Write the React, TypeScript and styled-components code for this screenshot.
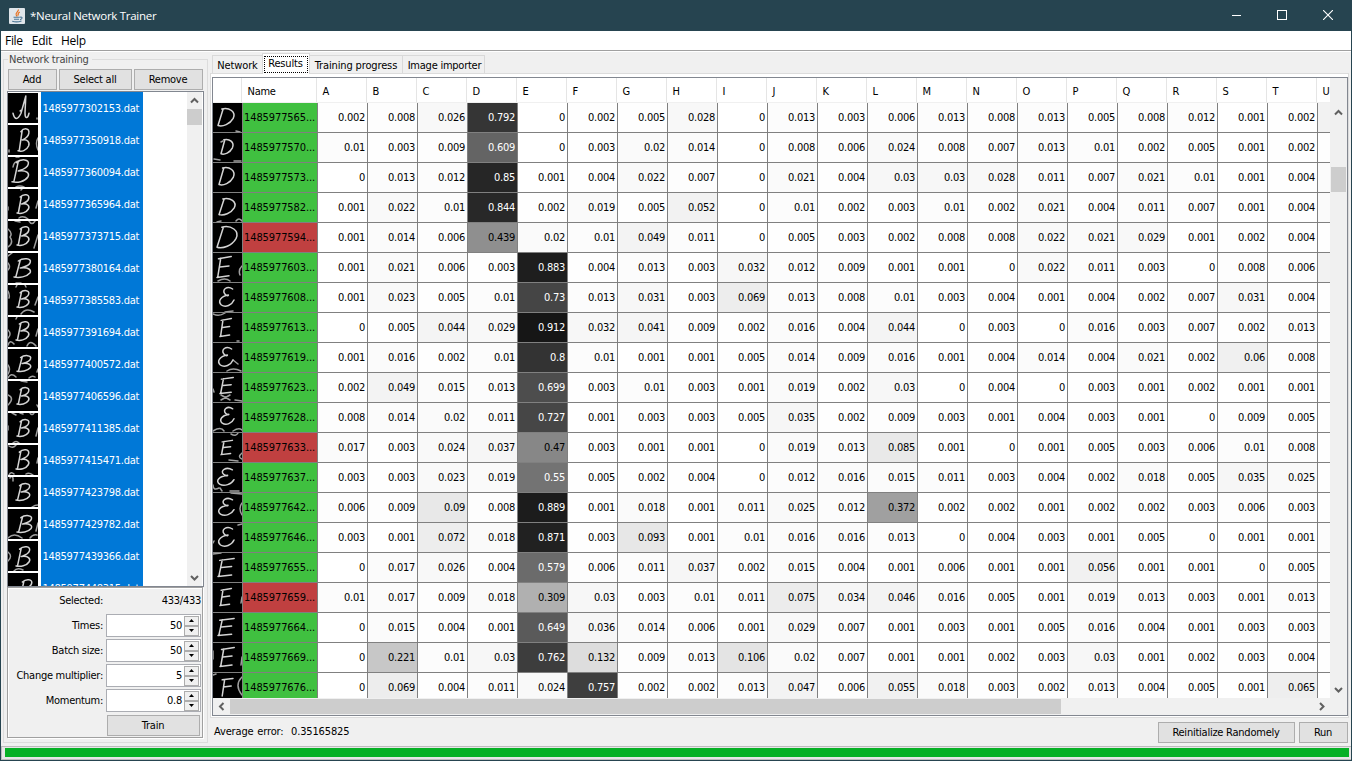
import React from "react";
import styled, { createGlobalStyle, css } from "styled-components";

const GlobalStyle = createGlobalStyle`
  *, *::before, *::after { box-sizing: border-box; }
  body {
    margin: 0;
    overflow: hidden;
    font-family: "DejaVu Sans Condensed", "DejaVu Sans", sans-serif;
    font-stretch: condensed;
    font-size: 11px;
    letter-spacing: -0.27px;
    line-height: 14px;
    color: #000;
  }
`;

/* ---------- window frame ---------- */

const Window = styled.div`
  width: 1352px;
  height: 761px;
  display: flex;
  flex-direction: column;
  background: #264450;
`;

const TitleBar = styled.header`
  height: 31px;
  flex: none;
  display: flex;
  align-items: center;
  padding: 0 1px 0 9px;
  color: #fff;
  font-family: "Open Sans", "Noto Sans", sans-serif;
  font-stretch: normal;
  font-size: 11.5px;
  letter-spacing: -0.28px;
`;

const Title = styled.span`
  flex: 1;
  margin-left: 5px;
`;

const CaptionButton = styled.span`
  width: 46px;
  height: 31px;
  display: flex;
  align-items: center;
  justify-content: center;
  padding-bottom: 1px;
`;

const Client = styled.div`
  flex: 1;
  min-height: 0;
  margin: 0 1px 1px;
  display: flex;
  flex-direction: column;
  background: #f0f0f0;
`;

const MenuBar = styled.nav`
  height: 20px;
  flex: none;
  display: flex;
  align-items: center;
  gap: 9px;
  padding: 1px 0 0 4px;
  background: #fff;
  border-bottom: 1px solid #a0a0a0;
  box-shadow: 0 1px 0 #fff;
  font-family: "Open Sans", "Noto Sans", sans-serif;
  font-stretch: normal;
  font-size: 12px;
  letter-spacing: -0.3px;
`;

const Content = styled.div`
  height: 695px;
  flex: none;
  display: flex;
`;

const ProgressTrack = styled.div`
  height: 14px;
  flex: none;
  padding: 1px 2px 1px 3px;
  background: #e6e6e6;
  border: 1px solid #bcbcbc;
  border-right-width: 0;
`;

const ProgressFill = styled.div`
  height: 9px;
  background: #06b025;
`;

/* ---------- shared controls ---------- */

const Button = styled.button<{ $w: number }>`
  width: ${(p) => p.$w}px;
  height: 21px;
  flex: none;
  padding: 0 1px 0 0;
  border: 1px solid #adadad;
  background: #e1e1e1;
  color: #000;
  font: inherit;
  letter-spacing: -0.24px;
`;

const ScrollColumn = styled.div<{ $top: number }>`
  width: 15px;
  flex: none;
  display: flex;
  flex-direction: column;
  align-items: center;
  justify-content: space-between;
  padding: ${(p) => p.$top}px 0 4px;
  position: relative;
  background: #f0f0f0;
`;

const ScrollThumb = styled.div<{ $top: number; $h: number }>`
  position: absolute;
  left: 0;
  right: 0;
  top: ${(p) => p.$top}px;
  height: ${(p) => p.$h}px;
  background: #cdcdcd;
`;

const ScrollRow = styled.div`
  height: 15px;
  width: 1117px;
  flex: none;
  margin-top: 1px;
  display: flex;
  align-items: center;
  background: #f0f0f0;
`;

const ScrollEnd = styled.span`
  width: 17px;
  display: flex;
  justify-content: center;
`;

const ScrollRowThumb = styled.div`
  width: 831px;
  height: 15px;
  margin-right: auto;
  background: #cdcdcd;
`;

const chevrons = {
  up: "M1 6.5 L4.5 3 L8 6.5",
  down: "M1 3 L4.5 6.5 L8 3",
  left: "M6.5 1 L3 4.5 L6.5 8",
  right: "M3 1 L6.5 4.5 L3 8",
};

const Chevron = ({ dir }: { dir: keyof typeof chevrons }) => (
  <svg width="9" height="9" viewBox="0 0 9 9">
    <path d={chevrons[dir]} fill="none" stroke="#606060" strokeWidth="2" />
  </svg>
);

/* ---------- handwritten letter thumbnails ---------- */

const letters = {
  A: "M0 15 C1 21 3 21 5 15 L8 0 L7.5 15 C7.5 19 9 21 10 15 M4.5 13 L5.5 12",
  B: "M3.5 2 L1 19 M2.4 3 C5 -0.5 10 0 9 4.5 C8.5 8 5.5 9 3.5 10 C8 9 10 12 8.8 15 C7 19 3 20 0 19",
  D: "M3.2 1 L0 18.5 M2.4 1 C7 -1 11.5 4 9.5 11 C7.5 17 3 20 0 18.5",
  E: "M2.5 2 L0.5 19 M1 2.5 L9.5 0.5 M2 10 L8 9 M0 19.5 L8 18",
  e: "M9 2 C5 -2 1 3 3.5 7 C4.5 9 6 9 6 8 C1 9 -2 14 1 18 C4 21 8.5 18 10 13",
  F: "M3 2 L1 20 M1 2 L10 0.5 M2 10 L8.5 9",
};

type Sketch = [keyof typeof letters, number, number, number, number, string];

const Thumb = styled.svg`
  flex: none;
  display: block;
  background: #000;
  fill: none;
  stroke: #d4d4d4;
  stroke-width: 1.5;
  stroke-linecap: round;
  stroke-linejoin: round;

  path { vector-effect: non-scaling-stroke; }
`;

const Handwriting = ({ sketch, size }: { sketch: Sketch; size: number }) => {
  const [letter, x, y, w, h, strays] = sketch;
  return (
    <Thumb width={size} height={size} viewBox={`0 0 ${size} ${size}`}>
      <path d={letters[letter]} transform={`translate(${x} ${y}) scale(${w / 10} ${h / 20})`} />
      <path d={strays} opacity="0.75" />
    </Thumb>
  );
};

/* ---------- training sidebar ---------- */

const GroupBox = styled.section`
  width: 205px;
  height: 684px;
  flex: none;
  margin: 8px 0 0 2px;
  border: 1px solid #dcdcdc;
`;

const GroupLabel = styled.div`
  height: 17px;
  width: 84px;
  margin: -8px 0 0 4px;
  padding: 1px 0 0 1px;
  background: #f0f0f0;
  color: #464646;
  white-space: nowrap;
  letter-spacing: -0.2px;
`;

const ButtonRow = styled.div`
  display: flex;
  gap: 2px;
  padding-left: 4px;
`;

const ListBox = styled.div`
  width: 197px;
  height: 496px;
  margin: 1px 0 0 3px;
  display: flex;
  border: 1px solid #828790;
  background: #fff;
`;

const FileList = styled.div`
  width: 179px;
  height: 494px;
  overflow: hidden;
`;

const FileItem = styled.div`
  height: 32px;
  display: flex;
  align-items: center;
  gap: 3px;
`;

const FileName = styled.span`
  width: 102px;
  height: 32px;
  padding-left: 1.5px;
  line-height: 33px;
  background: #0078d7;
  color: #fff;
  white-space: nowrap;
`;

const Settings = styled.div`
  width: 196px;
  height: 151px;
  margin-left: 3px;
  border: 1px solid #a0a0a0;
  box-shadow: 1px 1px 0 #fff, inset 1px 1px 0 #fff;
`;

const Setting = styled.div`
  height: 25px;
  display: flex;
  align-items: center;
  justify-content: flex-end;
  gap: 3px;
  padding-right: 1px;
`;

const SelectedCount = styled.span`
  width: 95px;
  text-align: right;
`;

const SpinnerBox = styled.div`
  width: 95px;
  height: 23px;
  display: flex;
  align-items: center;
  padding-right: 1px;
  border: 1px solid #abadb3;
  background: #fff;
`;

const SpinnerValue = styled.span`
  flex: 1;
  padding-right: 2px;
  text-align: right;
`;

const SpinnerButtons = styled.div`
  display: flex;
  flex-direction: column;
`;

const SpinnerButton = styled.span`
  width: 15px;
  height: 10px;
  display: flex;
  align-items: center;
  justify-content: center;
  border: 1px solid #adadad;
  background: #f0f0f0;
`;

const TrainRow = styled.div`
  display: flex;
  justify-content: flex-end;
  padding: 2px 2px 0 0;
`;

const files: [string, Sketch][] = [
  ["1485977302153.dat", ["A", 5, 3, 16, 23, "M29 25 L29 26"]],
  ["1485977350918.dat", ["B", 10, 3, 12, 24, "M30 13 Q27 18 30 25 M1 25 L1 27"]],
  ["1485977360094.dat", ["B", 4, 2, 18, 24, "M8 0 L11 0 M8 30 Q12 28 16 30 M5 10 Q6 4 11 4"]],
  ["1485977365964.dat", ["B", 9, 5, 13, 20, "M30 12 L28 19 M11 29 Q15 26 20 30 M13 1 L14 0 M0 18 L0 21"]],
  ["1485977373715.dat", ["B", 9, 5, 13, 20, "M0 8 Q5 12 2 16 Q6 22 0 26 M7 0 L12 1 M21 0 Q24 5 27 0 M30 14 L26 27"]],
  ["1485977380164.dat", ["B", 6, 5, 18, 20, "M0 3 L4 0 M0 10 Q3 14 0 17 M8 30 L13 30"]],
  ["1485977385583.dat", ["B", 9, 5, 13, 18, "M30 12 L27 20 M13 29 Q18 22 26 27 M0 6 Q2 10 1 13 M8 2 L9 0 M17 0 L18 2"]],
  ["1485977391694.dat", ["B", 8, 4, 14, 20, "M0 13 Q4 17 0 21 M0 28 Q2 22 6 27 M19 29 Q22 22 28 29 M30 12 L28 19 M8 2 L9 0"]],
  ["1485977400572.dat", ["B", 9, 6, 15, 17, "M0 16 Q3 20 0 25 M0 29 Q3 23 8 28 M21 29 Q24 26 27 28 M30 20 L29 23"]],
  ["1485977406596.dat", ["B", 9, 6, 13, 18, "M0 14 Q7 17 0 24 M13 0 L19 1 M29 24 L30 26"]],
  ["1485977411385.dat", ["B", 9, 6, 13, 18, "M4 0 L8 2 M12 0 L15 1 M22 0 Q24 3 26 0 M30 15 L28 23 M5 30 Q8 27 11 30 M0 13 L0 17"]],
  ["1485977415471.dat", ["B", 8, 4, 14, 21, "M1 1 Q5 4 8 0 M1 30 Q3 26 6 29 M18 29 Q21 27 25 30 M30 13 L29 18"]],
  ["1485977423798.dat", ["B", 8, 6, 15, 18, "M2 1 Q3 -2 5 1 L5 4 M24 30 Q27 28 30 28"]],
  ["1485977429782.dat", ["B", 9, 6, 16, 18, "M0 29 Q6 23 14 29 M22 29 Q25 25 29 26 M30 14 L28 22"]],
  ["1485977439366.dat", ["B", 8, 5, 15, 21, "M0 11 Q5 15 0 20 M6 30 Q9 26 15 29"]],
  ["1485977448315.dat", ["B", 11, 6, 14, 20, ""]],
];

const spinners: [string, string][] = [
  ["Times:", "50"],
  ["Batch size:", "50"],
  ["Change multiplier:", "5"],
  ["Momentum:", "0.8"],
];

const Spinner = ({ value }: { value: string }) => (
  <SpinnerBox>
    <SpinnerValue>{value}</SpinnerValue>
    <SpinnerButtons>
      <SpinnerButton>
        <svg width="5" height="3"><path d="M0 3 L2.5 0 L5 3 Z" /></svg>
      </SpinnerButton>
      <SpinnerButton>
        <svg width="5" height="3"><path d="M0 0 L2.5 3 L5 0 Z" /></svg>
      </SpinnerButton>
    </SpinnerButtons>
  </SpinnerBox>
);

const TrainingSidebar = () => (
  <GroupBox>
    <GroupLabel>Network training</GroupLabel>
    <ButtonRow>
      <Button $w={49}>Add</Button>
      <Button $w={73}>Select all</Button>
      <Button $w={69}>Remove</Button>
    </ButtonRow>
    <ListBox>
      <FileList>
        {files.map(([name, sketch]) => (
          <FileItem key={name}>
            <Handwriting sketch={sketch} size={30} />
            <FileName>{name}</FileName>
          </FileItem>
        ))}
      </FileList>
      <ScrollColumn $top={4}>
        <Chevron dir="up" />
        <ScrollThumb $top={17} $h={16} />
        <Chevron dir="down" />
      </ScrollColumn>
    </ListBox>
    <Settings>
      <Setting>
        Selected:
        <SelectedCount>433/433</SelectedCount>
      </Setting>
      {spinners.map(([label, value]) => (
        <Setting key={label}>
          {label}
          <Spinner value={value} />
        </Setting>
      ))}
      <TrainRow>
        <Button $w={93}>Train</Button>
      </TrainRow>
    </Settings>
  </GroupBox>
);

/* ---------- results area ---------- */

const Results = styled.main`
  flex: 1;
  min-width: 0;
  padding: 2px 2px 0 2px;
  display: flex;
  flex-direction: column;
`;

const Tabs = styled.div`
  height: 20px;
  flex: none;
  display: flex;
  align-items: flex-end;
  padding-left: 2px;
`;

const Tab = styled.div<{ $w: number; $active?: boolean }>`
  width: ${(p) => p.$w}px;
  height: 18px;
  flex: none;
  display: flex;
  justify-content: center;
  padding-top: 3px;
  white-space: nowrap;
  letter-spacing: -0.14px;
  border: 1px solid #d9d9d9;
  border-width: 1px 1px 0 0;
  &:first-child { border-left-width: 1px; }
  &:last-child { padding-left: 2px; letter-spacing: -0.24px; }
  ${(p) =>
    p.$active &&
    css`
      height: 21px;
      margin: 0 0 -1px -1px;
      padding: 2px 1px 1px;
      position: relative;
      background: #fff;
      border-left-width: 1px;
    `}
`;

const FocusFrame = styled.span`
  flex: 1;
  height: 17px;
  padding-right: 1px;
  line-height: 13px;
  text-align: center;
  border: 1px dotted #000;
`;

const TabPane = styled.div`
  width: 1139px;
  height: 645px;
  flex: none;
  padding: 3px 1px 1px;
  border: 1px solid #dcdcdc;
  background: #fff;
`;

const TableFrame = styled.div`
  width: 1136px;
  height: 639px;
  display: flex;
  flex-direction: column;
  border: 1px solid #828790;
  background: #f0f0f0;
`;

const HeaderRow = styled.div`
  width: 1117px;
  height: 25px;
  flex: none;
  display: flex;
  overflow: hidden;
  background: #fff;
`;

const HeaderCell = styled.div<{ $w: number }>`
  width: ${(p) => p.$w}px;
  flex: none;
  padding: 7px 0 0 4.5px;
  border-bottom: 1px solid #f0f0f0;
  background: linear-gradient(#e5e5e5, #e5e5e5) right 1px top / 1px 100% no-repeat;
`;

const BodyArea = styled.div`
  height: 595px;
  flex: none;
  display: flex;
  gap: 1px;
`;

const Viewport = styled.div`
  width: 1117px;
  height: 595px;
  flex: none;
  overflow: hidden;
  background: #fff;
`;

const DataRow = styled.div`
  height: 30px;
  width: 1200px;
  display: flex;
`;

const ImageCell = styled.div`
  width: 30px;
  border: solid #808080;
  border-width: 0 1px 1px 0;
`;

const NameCell = styled.div<{ $ok: boolean }>`
  width: 75px;
  padding-left: 1px;
  line-height: 30px;
  white-space: nowrap;
  letter-spacing: -0.1px;
  border: solid #808080;
  border-width: 0 1px 1px 0;
  background: ${(p) => (p.$ok ? "#40c040" : "#c04040")};
`;

const shade = (v: number) => Math.round(255 * (1 - v));

const ValueCell = styled.div<{ $v: number }>`
  width: 50px;
  padding-right: 2px;
  line-height: 30px;
  text-align: right;
  border: solid #808080;
  border-width: 0 1px 1px 0;
  color: ${(p) => (p.$v > 0.5 ? "#fff" : "#000")};
  background: ${(p) => `rgb(${shade(p.$v)}, ${shade(p.$v)}, ${shade(p.$v)})`};
`;

const Footer = styled.div`
  height: 21px;
  width: 1140px;
  flex: none;
  display: flex;
  align-items: center;
  gap: 4px;
  margin-top: 4px;
  padding: 0 2px 0 4px;
`;

const AverageError = styled.span`
  flex: 1;
  padding-bottom: 1px;
  white-space: pre;
  letter-spacing: -0.15px;
  word-spacing: 0.8px;
`;

const columns = "ABCDEFGHIJKLMNOPQRSTU".split("");

type Row = [string, boolean, Sketch, string, number];

const rows: Row[] = [
  ["1485977565", true, ["D", 5, 5, 16, 19, "M23 28 L27 29"], "0.002 0.008 0.026 0.792 0 0.002 0.005 0.028 0 0.013 0.003 0.006 0.013 0.008 0.013 0.005 0.008 0.012 0.001 0.002", 0.05],
  ["1485977570", true, ["D", 8, 6, 12, 16, "M1 26 L7 27 M21 28 L28 28 M8 9 L10 8"], "0.01 0.003 0.009 0.609 0 0.003 0.02 0.014 0 0.008 0.006 0.024 0.008 0.007 0.013 0.01 0.002 0.005 0.001 0.002", 0.003],
  ["1485977573", true, ["D", 6, 4, 15, 19, ""], "0 0.013 0.012 0.85 0.001 0.004 0.022 0.007 0 0.021 0.004 0.03 0.03 0.028 0.011 0.007 0.021 0.01 0.001 0.004", 0.015],
  ["1485977582", true, ["D", 6, 5, 16, 18, "M23 28 Q26 24 29 28 M4 29 L8 28"], "0.001 0.022 0.01 0.844 0.002 0.019 0.005 0.052 0 0.01 0.002 0.003 0.01 0.002 0.021 0.004 0.011 0.007 0.001 0.004", 0.02],
  ["1485977594", false, ["D", 4, 3, 20, 23, ""], "0.001 0.014 0.006 0.439 0.02 0.01 0.049 0.011 0 0.005 0.003 0.002 0.008 0.008 0.022 0.021 0.029 0.001 0.002 0.004", 0.003],
  ["1485977603", true, ["E", 4, 3, 15, 22, "M29 13 Q25 17 27 22 M5 28 Q12 24 17 28"], "0.001 0.021 0.006 0.003 0.883 0.004 0.013 0.003 0.032 0.012 0.009 0.001 0.001 0 0.022 0.011 0.003 0 0.008 0.006", 0.05],
  ["1485977608", true, ["e", 7, 4, 14, 20, "M12 29 L20 28"], "0.001 0.023 0.005 0.01 0.73 0.013 0.031 0.003 0.069 0.013 0.008 0.01 0.003 0.004 0.001 0.004 0.002 0.007 0.031 0.004", 0.003],
  ["1485977613", true, ["E", 7, 5, 12, 19, "M0 1 Q6 4 12 0 M24 28 L26 28"], "0 0.005 0.044 0.029 0.912 0.032 0.041 0.009 0.002 0.016 0.004 0.044 0 0.003 0 0.016 0.003 0.007 0.002 0.013", 0.003],
  ["1485977619", true, ["e", 6, 4, 14, 20, "M14 28 Q20 24 28 28 M20 17 L25 21"], "0.001 0.016 0.002 0.01 0.8 0.01 0.001 0.001 0.005 0.014 0.009 0.016 0.001 0.004 0.014 0.004 0.021 0.002 0.06 0.008", 0.003],
  ["1485977623", true, ["E", 7, 4, 14, 17, "M0 16 L1 19 M8 22 L17 27 M8 27 L17 22 M22 27 L29 28"], "0.002 0.049 0.015 0.013 0.699 0.003 0.01 0.003 0.001 0.019 0.002 0.03 0 0.004 0 0.003 0.001 0.002 0.001 0.001", 0.003],
  ["1485977628", true, ["e", 8, 4, 13, 18, "M0 28 Q8 23 11 28 M20 28 Q26 24 29 27"], "0.008 0.014 0.02 0.011 0.727 0.001 0.003 0.003 0.005 0.035 0.002 0.009 0.003 0.001 0.004 0.003 0.001 0 0.009 0.005", 0.003],
  ["1485977633", false, ["E", 8, 7, 12, 15, "M18 1 Q23 4 25 0 M16 27 L25 28 M29 20 Q24 24 29 26"], "0.017 0.003 0.024 0.037 0.47 0.003 0.001 0.001 0 0.019 0.013 0.085 0.001 0 0.001 0.005 0.003 0.006 0.01 0.008", 0.003],
  ["1485977637", true, ["e", 5, 5, 16, 18, "M0 22 Q0 28 6 25 M7 25 L9 28 M17 28 L26 28"], "0.003 0.003 0.023 0.019 0.55 0.005 0.002 0.004 0 0.012 0.016 0.015 0.011 0.003 0.004 0.002 0.018 0.005 0.035 0.025", 0.003],
  ["1485977642", true, ["e", 6, 5, 15, 18, "M29 10 Q25 15 29 22 M18 0 L29 1"], "0.006 0.009 0.09 0.008 0.889 0.001 0.018 0.001 0.011 0.025 0.012 0.372 0.002 0.002 0.001 0.002 0.002 0.003 0.006 0.003", 0.003],
  ["1485977646", true, ["e", 6, 4, 15, 20, "M25 2 L29 1 M0 20 L1 18"], "0.003 0.001 0.072 0.018 0.871 0.003 0.093 0.001 0.01 0.016 0.016 0.013 0 0.004 0.003 0.001 0.005 0 0.001 0.001", 0.01],
  ["1485977655", true, ["E", 5, 5, 17, 19, "M0 1 L8 0"], "0 0.017 0.026 0.004 0.579 0.006 0.011 0.037 0.002 0.015 0.004 0.001 0.006 0.001 0.001 0.056 0.001 0.001 0 0.005", 0.003],
  ["1485977659", false, ["E", 7, 5, 12, 18, "M29 14 L28 20"], "0.01 0.017 0.009 0.018 0.309 0.03 0.003 0.01 0.011 0.075 0.034 0.046 0.016 0.005 0.001 0.019 0.013 0.003 0.001 0.013", 0.003],
  ["1485977664", true, ["E", 5, 5, 17, 18, ""], "0 0.015 0.004 0.001 0.649 0.036 0.014 0.006 0.001 0.029 0.007 0.001 0.003 0.001 0.005 0.016 0.004 0.001 0.003 0.003", 0.01],
  ["1485977669", true, ["E", 7, 4, 15, 20, "M29 14 L28 22 M0 8 L0 16"], "0 0.221 0.01 0.03 0.762 0.132 0.009 0.013 0.106 0.02 0.007 0.001 0.001 0.002 0.003 0.03 0.001 0.002 0.003 0.004", 0.003],
  ["1485977676", true, ["F", 8, 5, 12, 18, "M0 2 L3 1 M29 4 Q21 12 29 22"], "0 0.069 0.004 0.011 0.024 0.757 0.002 0.002 0.013 0.047 0.006 0.055 0.018 0.003 0.002 0.013 0.004 0.005 0.001 0.065", 0.003],
];

const ResultsPanel = () => (
  <Results>
    <Tabs>
      <Tab $w={51}>Network</Tab>
      <Tab $w={48} $active>
        <FocusFrame>Results</FocusFrame>
      </Tab>
      <Tab $w={93}>Training progress</Tab>
      <Tab $w={82}>Image importer</Tab>
    </Tabs>
    <TabPane>
      <TableFrame>
        <HeaderRow>
          <HeaderCell $w={30} />
          <HeaderCell $w={75}>Name</HeaderCell>
          {columns.map((c) => (
            <HeaderCell $w={50} key={c}>{c}</HeaderCell>
          ))}
        </HeaderRow>
        <BodyArea>
          <Viewport>
            {rows.map(([name, ok, sketch, values, last]) => (
              <DataRow key={name}>
                <ImageCell>
                  <Handwriting sketch={sketch} size={29} />
                </ImageCell>
                <NameCell $ok={ok}>{name}...</NameCell>
                {values.split(" ").map((v, i) => (
                  <ValueCell $v={Number(v)} key={i}>{v}</ValueCell>
                ))}
                <ValueCell $v={last} />
              </DataRow>
            ))}
          </Viewport>
          <ScrollColumn $top={5}>
            <Chevron dir="up" />
            <ScrollThumb $top={64} $h={25} />
            <Chevron dir="down" />
          </ScrollColumn>
        </BodyArea>
        <ScrollRow>
          <ScrollEnd><Chevron dir="left" /></ScrollEnd>
          <ScrollRowThumb />
          <ScrollEnd><Chevron dir="right" /></ScrollEnd>
        </ScrollRow>
      </TableFrame>
    </TabPane>
    <Footer>
      <AverageError>Average error:  0.35165825</AverageError>
      <Button $w={137}>Reinitialize Randomely</Button>
      <Button $w={49}>Run</Button>
    </Footer>
  </Results>
);

const JavaIcon = () => (
  <svg width="16" height="16" viewBox="0 0 16 16" fill="none">
    <rect width="16" height="16" rx="1" fill="#dfe5ea" />
    <path d="M9.3 1.5 C10 3.5 6.2 4.5 7.2 7 L8.2 8.5 M10.8 4 C8.5 5 8.8 6 9.2 7.6" stroke="#e76f1d" strokeWidth="1.2" />
    <path d="M4.5 9.3 H10.8 M5 11.2 H10 M3.2 13.3 Q8 14.6 12.5 13 M11 9.3 C14 8.6 13.5 11 11 11.6" stroke="#4e7896" strokeWidth="1.1" />
  </svg>
);

export default function App() {
  return (
    <>
      <GlobalStyle />
      <Window>
        <TitleBar>
          <JavaIcon />
          <Title>*Neural Network Trainer</Title>
          <CaptionButton>
            <svg width="10" height="10"><rect x="1" y="5" width="9" height="1" fill="#fff" /></svg>
          </CaptionButton>
          <CaptionButton>
            <svg width="10" height="10"><rect x="0.5" y="0.5" width="9" height="9" fill="none" stroke="#fff" /></svg>
          </CaptionButton>
          <CaptionButton>
            <svg width="10" height="10"><path d="M0 0 L10 10 M10 0 L0 10" stroke="#fff" strokeWidth="1.1" /></svg>
          </CaptionButton>
        </TitleBar>
        <Client>
          <MenuBar>
            <span>File</span>
            <span>Edit</span>
            <span>Help</span>
          </MenuBar>
          <Content>
            <TrainingSidebar />
            <ResultsPanel />
          </Content>
          <ProgressTrack>
            <ProgressFill />
          </ProgressTrack>
        </Client>
      </Window>
    </>
  );
}
